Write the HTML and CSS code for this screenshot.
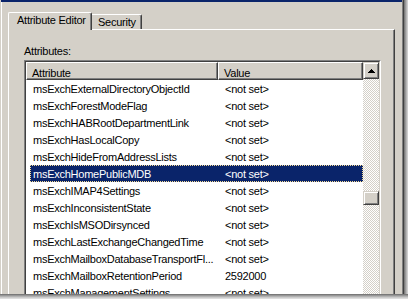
FILE: index.html
```html
<!DOCTYPE html>
<html lang="en">
<head>
  <meta charset="UTF-8" />
  <title>Attribute Editor</title>
  <link rel="stylesheet" href="styles.css">
</head>
<body>
  <div class="window">
    <div class="titlebar"></div>

    <div class="tabs">
      <div class="tab active">Attribute Editor</div>
      <div class="tab">Security</div>
    </div>

    <div class="panel">
      <div class="label">Attributes:</div>

      <div class="listbox">
        <div class="listbox-inner">
          <div class="list">
            <div class="header">
              <div class="head-cell head-attr">Attribute</div>
              <div class="head-cell head-value">Value</div>
            </div>

            <div class="row"><div class="cell-attr">msExchExternalDirectoryObjectId</div><div class="cell-value">&lt;not set&gt;</div></div>
            <div class="row"><div class="cell-attr">msExchForestModeFlag</div><div class="cell-value">&lt;not set&gt;</div></div>
            <div class="row"><div class="cell-attr">msExchHABRootDepartmentLink</div><div class="cell-value">&lt;not set&gt;</div></div>
            <div class="row"><div class="cell-attr">msExchHasLocalCopy</div><div class="cell-value">&lt;not set&gt;</div></div>
            <div class="row"><div class="cell-attr">msExchHideFromAddressLists</div><div class="cell-value">&lt;not set&gt;</div></div>
            <div class="row selected"><div class="cell-attr">msExchHomePublicMDB</div><div class="cell-value">&lt;not set&gt;</div></div>
            <div class="row"><div class="cell-attr">msExchIMAP4Settings</div><div class="cell-value">&lt;not set&gt;</div></div>
            <div class="row"><div class="cell-attr">msExchInconsistentState</div><div class="cell-value">&lt;not set&gt;</div></div>
            <div class="row"><div class="cell-attr">msExchIsMSODirsynced</div><div class="cell-value">&lt;not set&gt;</div></div>
            <div class="row"><div class="cell-attr">msExchLastExchangeChangedTime</div><div class="cell-value">&lt;not set&gt;</div></div>
            <div class="row"><div class="cell-attr">msExchMailboxDatabaseTransportFl...</div><div class="cell-value">&lt;not set&gt;</div></div>
            <div class="row"><div class="cell-attr">msExchMailboxRetentionPeriod</div><div class="cell-value">2592000</div></div>
            <div class="row"><div class="cell-attr">msExchManagementSettings</div><div class="cell-value">&lt;not set&gt;</div></div>
          </div>

          <!-- vertical scrollbar -->
          <div class="scrollbar">
            <div class="sb-button">
              <svg width="7" height="4" viewBox="0 0 7 4" shape-rendering="crispEdges">
                <rect x="3" y="0" width="1" height="1" fill="#000" />
                <rect x="2" y="1" width="3" height="1" fill="#000" />
                <rect x="1" y="2" width="5" height="1" fill="#000" />
                <rect x="0" y="3" width="7" height="1" fill="#000" />
              </svg>
            </div>
            <div class="sb-track">
              <div class="sb-thumb"></div>
            </div>
          </div>
        </div>
      </div>
    </div>
  </div>

  <!-- drop shadow round the captured window -->
  <div class="shadow-right"></div>
  <div class="shadow-bottom"></div>
</body>
</html>
```

FILE: styles.css
```css
* {
  box-sizing: border-box;
}

body {
  margin: 0;
  width: 408px;
  height: 299px;
  overflow: hidden;
  position: relative;
  background-color: #ffffff;
  font-family: "Liberation Sans", Arial, sans-serif;
  font-size: 11px;
  letter-spacing: -0.25px;
  color: #000;
}

.window {
  width: 404px;
  height: 299px;
  overflow: hidden;
  background-color: #d4d0c8;
  border-left: 1px solid #d4d0c8;
  border-right: 1px solid #404040;
  box-shadow: inset 1px 0 #ffffff, inset -1px 0 #808080;
}

.titlebar {
  height: 2px;
  margin-right: 1px;
  background-color: #0a246a;
}

/* Tabs */
.tabs {
  display: flex;
  align-items: flex-end;
  height: 27px;
  padding-top: 10px;
  padding-left: 7px;
}

.tab {
  height: 15px;
  line-height: 14px;
  padding-left: 6px;
  width: 50px;
  border-top: 1px solid #ffffff;
  border-right: 1px solid #404040;
  box-shadow: inset -1px 0 #808080;
  border-top-right-radius: 2px;
}

.tab.active {
  position: relative;
  z-index: 1;
  width: 84px;
  height: 18px;
  line-height: 15px;
  padding-left: 8px;
  margin-bottom: -1px;
  border-left: 1px solid #ffffff;
  border-top-left-radius: 2px;
  background-color: #d4d0c8;
}

/* Tab page */
.panel {
  margin-left: 7px;
  width: 387px;
  height: 270px;
  padding: 15px 0 0 15px;
  border-top: 1px solid #ffffff;
  border-left: 1px solid #ffffff;
  border-right: 1px solid #404040;
  box-shadow: inset -1px 0 #808080;
}

.label {
  line-height: 13px;
  margin-bottom: 2px;
}

/* Sunken list view */
.listbox {
  width: 357px;
  height: 239px;
  border: 1px solid;
  border-color: #808080 #ffffff #ffffff #808080;
}

.listbox-inner {
  display: flex;
  height: 100%;
  border: 1px solid;
  border-color: #404040 #d4d0c8 #d4d0c8 #404040;
  background-color: #ffffff;
}

.list {
  flex: 1;
  overflow: hidden;
}

.header {
  display: flex;
  height: 18px;
}

.head-cell {
  height: 18px;
  line-height: 16px;
  padding: 2px 0 0 5px;
  background-color: #d4d0c8;
  border-top: 1px solid #ffffff;
  border-left: 1px solid #ffffff;
  border-bottom: 1px solid #404040;
  border-right: 1px solid #404040;
  box-shadow: inset -1px -1px #808080;
}

.head-attr {
  width: 192px;
}

.head-value {
  flex: 1;
}

.row {
  display: flex;
  height: 17px;
  line-height: 16px;
  padding-top: 1px;
  margin-left: 4px;
  white-space: nowrap;
}

.cell-attr {
  width: 188px;
  padding-left: 3px;
  overflow: hidden;
}

.cell-value {
  flex: 1;
  padding-left: 7px;
}

.row.selected {
  background-color: #0a246a;
  color: #ffffff;
  outline: 1px dotted #f5db95;
  outline-offset: -1px;
}

/* Scrollbar */
.scrollbar {
  width: 16px;
  display: flex;
  flex-direction: column;
}

.sb-button {
  height: 17px;
  display: flex;
  align-items: center;
  justify-content: center;
  padding-left: 1px;
  background-color: #d4d0c8;
  border-top: 1px solid #d4d0c8;
  border-left: 1px solid #d4d0c8;
  border-bottom: 1px solid #404040;
  border-right: 1px solid #404040;
  box-shadow: inset 1px 1px #ffffff, inset -1px -1px #808080;
}

.sb-track {
  flex: 1;
  background: repeating-conic-gradient(#ffffff 0 25%, #d4d0c8 0 50%) 0 0 / 2px 2px;
}

.sb-thumb {
  height: 14px;
  margin-top: 112px;
  background-color: #d4d0c8;
  border-top: 1px solid #d4d0c8;
  border-left: 1px solid #d4d0c8;
  border-bottom: 1px solid #404040;
  border-right: 1px solid #404040;
  box-shadow: inset 1px 1px #ffffff, inset -1px -1px #808080;
}

/* Drop shadow of the screenshot */
.shadow-right {
  position: absolute;
  top: 0;
  right: 0;
  width: 4px;
  height: 299px;
  background: linear-gradient(to right, #6e6e6e, #a8a8a8, #dcdcdc);
}

.shadow-bottom {
  position: absolute;
  left: 0;
  bottom: 0;
  width: 408px;
  height: 5px;
  background: linear-gradient(#6a6a6a, #9c9c9c, #c8c8c8, #e6e6e6);
}
```
